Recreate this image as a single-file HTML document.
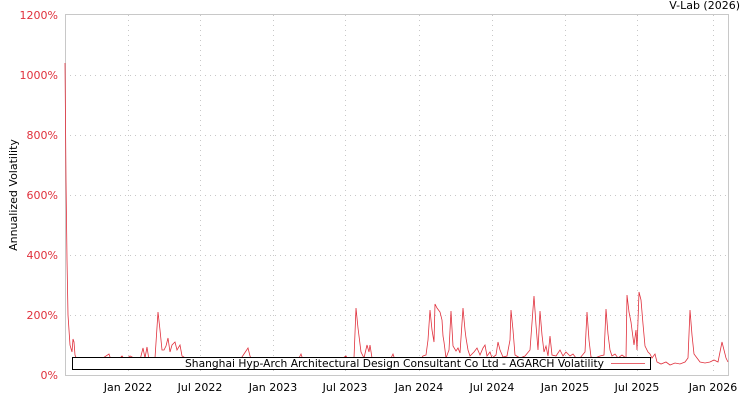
<!DOCTYPE html>
<html><head><meta charset="utf-8"><style>
html,body{margin:0;padding:0;background:#fff;}
svg{display:block;font-family:"DejaVu Sans","Liberation Sans",sans-serif;}
</style></head><body>
<svg width="750" height="400" viewBox="0 0 750 400" xmlns="http://www.w3.org/2000/svg">
<rect width="750" height="400" fill="#fff"/>
<g stroke="#c8c8c8" stroke-width="1" stroke-dasharray="1,4">
<line x1="128.5" y1="15" x2="128.5" y2="375"/><line x1="200.5" y1="15" x2="200.5" y2="375"/><line x1="273.5" y1="15" x2="273.5" y2="375"/><line x1="345.5" y1="15" x2="345.5" y2="375"/><line x1="419.5" y1="15" x2="419.5" y2="375"/><line x1="492.5" y1="15" x2="492.5" y2="375"/><line x1="565.5" y1="15" x2="565.5" y2="375"/><line x1="637.5" y1="15" x2="637.5" y2="375"/><line x1="713.5" y1="15" x2="713.5" y2="375"/>
<line x1="65" y1="75.5" x2="728" y2="75.5"/><line x1="65" y1="135.5" x2="728" y2="135.5"/><line x1="65" y1="195.5" x2="728" y2="195.5"/><line x1="65" y1="255.5" x2="728" y2="255.5"/><line x1="65" y1="315.5" x2="728" y2="315.5"/>
</g>
<rect x="65.5" y="14.5" width="663" height="361" fill="none" stroke="#c8c8c8"/>
<polyline fill="none" stroke="#e0303c" stroke-width="0.8" points="65,63 66,180 67,260 68,315 70,345 72,352 73,339 74,342 75,355 77,360 100,360 109,354 111,360 120,358 122,356 125,360 130,356 134,358 140,360 143,348 145,358 147,347 149,360 155,358 158,312 160,330 161,340 162,350 164,350 166,346 168,338 170,352 172,345 175,342 177,350 180,345 182,356 184,357 186,360 240,360 248,348 250,356 252,360 298,360 301,354 303,360 340,360 346,356 348,360 354,358 356,308 358,328 359,336 361,352 364,358 367,345 369,352 370,345 372,358 375,360 390,360 393,354 395,360 420,360 423,356 426,355 428,340 430,310 432,330 434,342 435,304 437,308 440,312 442,320 443,336 444,342 446,358 449,350 451,311 453,346 456,351 458,348 460,353 463,308 465,330 466,338 468,350 470,356 474,352 477,348 480,355 483,348 485,345 487,356 490,352 492,358 496,355 498,342 500,350 503,357 507,356 510,340 511,310 513,330 515,355 520,358 525,356 530,350 533,309 534,296 536,325 538,350 540,311 542,335 544,352 546,346 548,356 550,336 552,355 556,356 560,350 563,356 566,352 570,356 573,354 576,358 580,358 585,352 587,312 589,340 591,357 595,358 600,356 604,355 606,309 608,334 610,350 612,356 615,354 618,358 622,355 626,358 627,295 629,312 631,322 632,330 634,345 636,330 637,350 639,292 641,300 643,324 645,346 648,352 650,354 652,358 655,354 657,362 661,364 666,362 670,365 675,363 680,364 685,362 688,358 690,310 692,335 694,354 697,358 700,362 705,363 710,362 714,360 718,362 722,342 724,350 726,358 728,362"/>
<rect x="72.5" y="357.5" width="578" height="12" fill="#fff" stroke="#000"/>
<text x="185" y="367" font-size="10.7" textLength="419" lengthAdjust="spacingAndGlyphs" fill="#000">Shanghai Hyp-Arch Architectural Design Consultant Co Ltd - AGARCH Volatility</text>
<line x1="611" y1="363.5" x2="645" y2="363.5" stroke="#e0303c" stroke-width="0.8"/>
<g font-size="11" fill="#e0303c" text-anchor="end">
<text x="58" y="19">1200%</text><text x="58" y="79">1000%</text><text x="58" y="139">800%</text><text x="58" y="199">600%</text><text x="58" y="259">400%</text><text x="58" y="319">200%</text><text x="58" y="379">0%</text>
</g>
<text transform="translate(17,195) rotate(-90)" font-size="11" text-anchor="middle" fill="#000">Annualized Volatility</text>
<g font-size="11" fill="#000" text-anchor="middle">
<text x="128" y="391">Jan 2022</text><text x="200" y="391">Jul 2022</text><text x="273" y="391">Jan 2023</text><text x="345" y="391">Jul 2023</text><text x="419" y="391">Jan 2024</text><text x="492" y="391">Jul 2024</text><text x="565" y="391">Jan 2025</text><text x="637" y="391">Jul 2025</text><text x="713" y="391">Jan 2026</text>
</g>
<text x="740" y="9" font-size="11" text-anchor="end" fill="#000">V-Lab (2026)</text>
</svg>
</body></html>
